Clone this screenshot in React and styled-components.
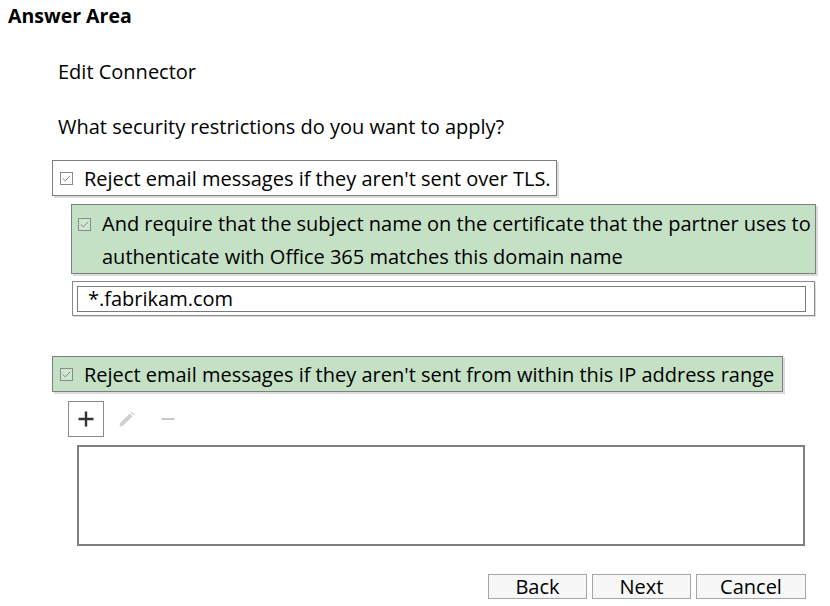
import React from "react";
import styled, { createGlobalStyle } from "styled-components";

const Global = createGlobalStyle`
  html, body { margin: 0; padding: 0; background: #fff; }
  body { font-family: "Open Sans", "Noto Sans", sans-serif; color: #000; }
  * { box-sizing: border-box; }
`;

const Page = styled.div`
  width: 830px;
  height: 606px;
  position: relative;
  overflow: hidden;
`;

const Header = styled.div`
  font-weight: 700;
  font-size: 19.5px;
  line-height: 24px;
  padding: 4px 0 0 8px;
  height: 30px;
`;

const Body = styled.div`
  padding-left: 52px;
  font-size: 20px;
`;

const Line = styled.div`
  padding-left: 6px;
  line-height: 30px;
  margin-top: ${(p) => p.$mt}px;
`;

const Option = styled.div`
  display: flex;
  align-items: ${(p) => (p.$multi ? "flex-start" : "center")};
  width: ${(p) => p.$w}px;
  margin-left: ${(p) => p.$ml || 0}px;
  margin-top: ${(p) => p.$mt}px;
  height: ${(p) => p.$h}px;
  padding: ${(p) => (p.$multi ? "2px 6px 0 6px" : "0 7px")};
  background: ${(p) => (p.$checked ? "#c5e1c5" : "#fff")};
  border: 1px solid #7f7f7f;
  box-shadow: 2px 2px 0 #dcdcdc;
  line-height: 33px;
`;

const CheckBox = styled.span`
  flex: none;
  width: 13px;
  height: 13px;
  border: 1px solid #8a8a8a;
  background: ${(p) => (p.$green ? "#cfe6cf" : "#fff")};
  margin-right: ${(p) => p.$gap}px;
  margin-top: ${(p) => p.$top || 0}px;
  display: flex;
  align-items: center;
  justify-content: center;
`;

const Text = styled.span`
  white-space: nowrap;
`;

const TextLine = styled.span`
  display: block;
  white-space: nowrap;
`;

const Outer = styled.div`
  margin-left: 20px;
  margin-top: 7px;
  width: 743px;
  height: 35px;
  border: 1px solid #8a8a8a;
  box-shadow: 1px 1px 0 #dcdcdc;
  padding: 4px 8px 4px 4px;
`;

const Input = styled.div`
  height: 26px;
  border: 1px solid #7a7a7a;
  padding-left: 10px;
  line-height: 24px;
  font-size: 20px;
`;

const Toolbar = styled.div`
  display: flex;
  align-items: center;
  margin-left: 16px;
  margin-top: 9px;
  height: 36px;
`;

const ToolButton = styled.div`
  width: ${(p) => p.$size || 36}px;
  height: 36px;
  display: flex;
  align-items: center;
  justify-content: center;
  border: 1px solid ${(p) => (p.$boxed ? "#8a8a8a" : "transparent")};
  margin-right: ${(p) => p.$mr || 0}px;
`;

const ListBox = styled.div`
  margin-left: 25px;
  margin-top: 8px;
  width: 728px;
  height: 101px;
  border: 2px solid #7f7f7f;
`;

const ButtonRow = styled.div`
  display: flex;
  justify-content: flex-end;
  gap: 5px;
  width: 806px;
  margin-top: 28px;
`;

const Button = styled.div`
  width: ${(p) => p.$w}px;
  height: 25px;
  background: #f7f7f7;
  border: 1px solid #a0a8a8;
  display: flex;
  align-items: center;
  justify-content: center;
  font-size: 20px;
  line-height: 22px;
`;

const Check = () => (
  <svg width="9" height="7" viewBox="0 0 9 7">
    <path d="M0.8 3.6 L3.3 5.8 L8.2 0.8" fill="none" stroke="#7a8a9a" strokeWidth="1" />
  </svg>
);

export default function App() {
  return (
    <Page>
      <Global />
      <Header>Answer Area</Header>
      <Body>
        <Line $mt={27}>Edit Connector</Line>
        <Line $mt={25}>What security restrictions do you want to apply?</Line>
        <Option $w={505} $h={36} $mt={18}>
          <CheckBox $gap={11}>
            <Check />
          </CheckBox>
          <Text>Reject email messages if they aren't sent over TLS.</Text>
        </Option>
        <Option $checked $multi $w={745} $h={70} $mt={8} $ml={19}>
          <CheckBox $green $gap={11} $top={11}>
            <Check />
          </CheckBox>
          <span>
            <TextLine>And require that the subject name on the certificate that the partner uses to</TextLine>
            <TextLine>authenticate with Office 365 matches this domain name</TextLine>
          </span>
        </Option>
        <Outer>
          <Input>*.fabrikam.com</Input>
        </Outer>
        <Option $checked $w={731} $h={36} $mt={40}>
          <CheckBox $green $gap={11}>
            <Check />
          </CheckBox>
          <Text>Reject email messages if they aren't sent from within this IP address range</Text>
        </Option>
        <Toolbar>
          <ToolButton $boxed $mr={11}>
            <svg width="18" height="18" viewBox="0 0 18 18">
              <path d="M9 1.5 V16.5 M1.5 9 H16.5" stroke="#333" strokeWidth="2.4" />
            </svg>
          </ToolButton>
          <ToolButton $size={22} $mr={23}>
            <svg width="19" height="19" viewBox="0 0 20 20">
              <path d="M2.5 17.5 L3.6 13.4 L13.4 3.6 L16.4 6.6 L6.6 16.4 Z" fill="#cfcfcf" />
              <path d="M14.4 2.6 L15.4 1.6 L18.4 4.6 L17.4 5.6 Z" fill="#cfcfcf" />
            </svg>
          </ToolButton>
          <ToolButton $size={16}>
            <svg width="16" height="18" viewBox="0 0 16 18">
              <path d="M0.5 9 H15.5" stroke="#c8c8c8" strokeWidth="2.4" />
            </svg>
          </ToolButton>
        </Toolbar>
        <ListBox />
      </Body>
      <ButtonRow>
        <Button $w={99}>Back</Button>
        <Button $w={99}>Next</Button>
        <Button $w={110}>Cancel</Button>
      </ButtonRow>
    </Page>
  );
}
